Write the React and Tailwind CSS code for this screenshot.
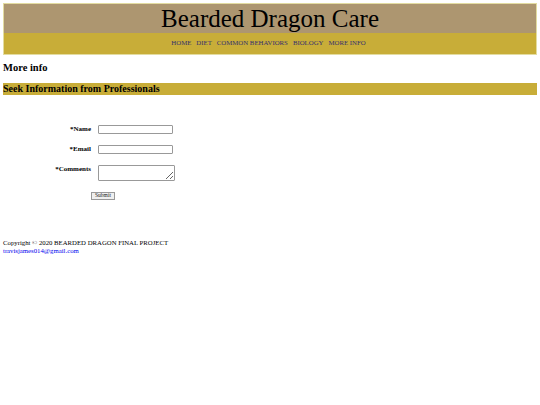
export default function App() {
  const serif = { fontFamily: '"Liberation Serif", "Times New Roman", serif' };
  return (
    <div className="w-[540px] h-[405px] bg-white" style={serif}>
      <div className="px-[3px] pt-[3px]">
        <header className="border border-[#e3dca0]">
          <div className="bg-[#ad9670] h-[29px] flex items-center justify-center">
            <h1 className="text-[25px] leading-none text-black">Bearded Dragon Care</h1>
          </div>
          <nav className="bg-[#c8ad38] h-[21px] flex items-center justify-center gap-[5px] pr-[3px] text-[6.8px] text-[#35306e]">
            <a>HOME</a>
            <a>DIET</a>
            <a>COMMON BEHAVIORS</a>
            <a>BIOLOGY</a>
            <a>MORE INFO</a>
          </nav>
        </header>
        <h2 className="mt-[8px] text-[10.5px] font-bold leading-none text-black">More info</h2>
        <h3 className="mt-[9px] bg-[#c8ad38] h-[12px] flex items-center text-[10px] font-bold leading-none text-black">Seek Information from Professionals</h3>
        <form className="mt-[30px] flex flex-col">
          <div className="flex items-center h-[9px]">
            <label className="w-[88px] text-right text-[7px] font-bold">*Name</label>
            <input className="ml-[7px] w-[75px] h-[9px] border border-[#999] rounded-[1px] bg-white" />
          </div>
          <div className="flex items-center h-[9px] mt-[11px]">
            <label className="w-[88px] text-right text-[7px] font-bold">*Email</label>
            <input className="ml-[7px] w-[75px] h-[9px] border border-[#999] rounded-[1px] bg-white" />
          </div>
          <div className="flex items-start mt-[11px]">
            <label className="w-[88px] text-right text-[7px] font-bold leading-none mt-[1px]">*Comments</label>
            <textarea className="ml-[7px] w-[77px] h-[16px] border border-[#999] rounded-[1px] bg-white resize-y" />
          </div>
          <div className="pl-[88px] mt-[11px]">
            <button type="button" className="w-[24px] h-[8px] border border-[#999] bg-[#efefef] text-[5.5px] leading-none text-[#222] flex items-center justify-center">Submit</button>
          </div>
        </form>
        <footer className="mt-[39px] text-[6.75px] leading-[8px]">
          <p className="text-black">Copyright © 2020 BEARDED DRAGON FINAL PROJECT</p>
          <a className="text-[#0000ee]">travisjames014@gmail.com</a>
        </footer>
      </div>
    </div>
  );
}
